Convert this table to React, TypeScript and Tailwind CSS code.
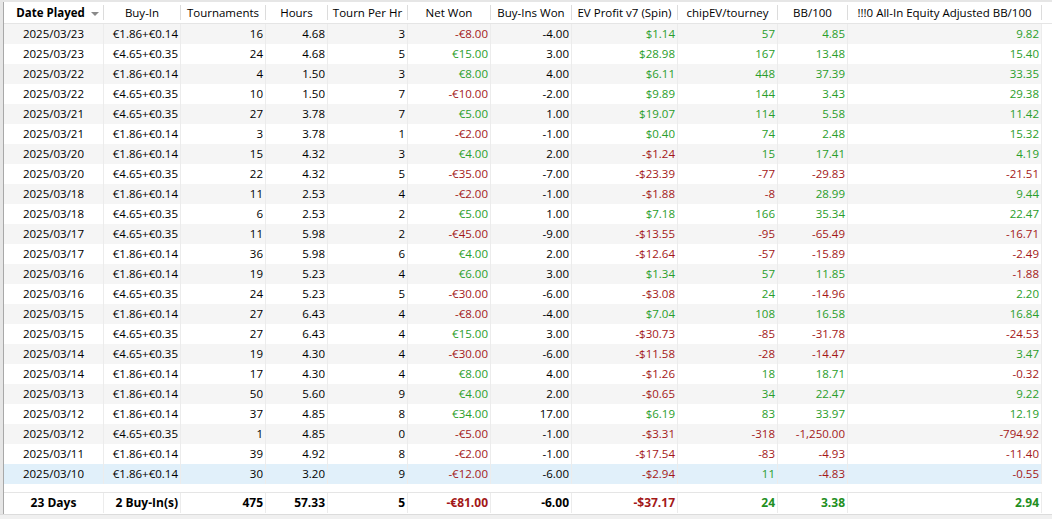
import React from 'react'

type Row = string[]

const widths = ['w-[100px]', 'w-[77px]', 'w-[85px]', 'w-[62px]', 'w-[80px]', 'w-[83px]', 'w-[81px]', 'w-[106px]', 'w-[100px]', 'w-[70px]', 'w-[194px]']
const headers = ['Date Played', 'Buy-In', 'Tournaments', 'Hours', 'Tourn Per Hr', 'Net Won', 'Buy-Ins Won', 'EV Profit v7 (Spin)', 'chipEV/tourney', 'BB/100', '!!!0 All-In Equity Adjusted BB/100']
// columns coloured by sign
const signed = [5, 7, 8, 9, 10]

const rows: Row[] = [
  ['2025/03/23', '€1.86+€0.14', '16', '4.68', '3', '-€8.00', '-4.00', '$1.14', '57', '4.85', '9.82'],
  ['2025/03/23', '€4.65+€0.35', '24', '4.68', '5', '€15.00', '3.00', '$28.98', '167', '13.48', '15.40'],
  ['2025/03/22', '€1.86+€0.14', '4', '1.50', '3', '€8.00', '4.00', '$6.11', '448', '37.39', '33.35'],
  ['2025/03/22', '€4.65+€0.35', '10', '1.50', '7', '-€10.00', '-2.00', '$9.89', '144', '3.43', '29.38'],
  ['2025/03/21', '€4.65+€0.35', '27', '3.78', '7', '€5.00', '1.00', '$19.07', '114', '5.58', '11.42'],
  ['2025/03/21', '€1.86+€0.14', '3', '3.78', '1', '-€2.00', '-1.00', '$0.40', '74', '2.48', '15.32'],
  ['2025/03/20', '€1.86+€0.14', '15', '4.32', '3', '€4.00', '2.00', '-$1.24', '15', '17.41', '4.19'],
  ['2025/03/20', '€4.65+€0.35', '22', '4.32', '5', '-€35.00', '-7.00', '-$23.39', '-77', '-29.83', '-21.51'],
  ['2025/03/18', '€1.86+€0.14', '11', '2.53', '4', '-€2.00', '-1.00', '-$1.88', '-8', '28.99', '9.44'],
  ['2025/03/18', '€4.65+€0.35', '6', '2.53', '2', '€5.00', '1.00', '$7.18', '166', '35.34', '22.47'],
  ['2025/03/17', '€4.65+€0.35', '11', '5.98', '2', '-€45.00', '-9.00', '-$13.55', '-95', '-65.49', '-16.71'],
  ['2025/03/17', '€1.86+€0.14', '36', '5.98', '6', '€4.00', '2.00', '-$12.64', '-57', '-15.89', '-2.49'],
  ['2025/03/16', '€1.86+€0.14', '19', '5.23', '4', '€6.00', '3.00', '$1.34', '57', '11.85', '-1.88'],
  ['2025/03/16', '€4.65+€0.35', '24', '5.23', '5', '-€30.00', '-6.00', '-$3.08', '24', '-14.96', '2.20'],
  ['2025/03/15', '€1.86+€0.14', '27', '6.43', '4', '-€8.00', '-4.00', '$7.04', '108', '16.58', '16.84'],
  ['2025/03/15', '€4.65+€0.35', '27', '6.43', '4', '€15.00', '3.00', '-$30.73', '-85', '-31.78', '-24.53'],
  ['2025/03/14', '€4.65+€0.35', '19', '4.30', '4', '-€30.00', '-6.00', '-$11.58', '-28', '-14.47', '3.47'],
  ['2025/03/14', '€1.86+€0.14', '17', '4.30', '4', '€8.00', '4.00', '-$1.26', '18', '18.71', '-0.32'],
  ['2025/03/13', '€1.86+€0.14', '50', '5.60', '9', '€4.00', '2.00', '-$0.65', '34', '22.47', '9.22'],
  ['2025/03/12', '€1.86+€0.14', '37', '4.85', '8', '€34.00', '17.00', '$6.19', '83', '33.97', '12.19'],
  ['2025/03/12', '€4.65+€0.35', '1', '4.85', '0', '-€5.00', '-1.00', '-$3.31', '-318', '-1,250.00', '-794.92'],
  ['2025/03/11', '€1.86+€0.14', '39', '4.92', '8', '-€2.00', '-1.00', '-$17.54', '-83', '-4.93', '-11.40'],
  ['2025/03/10', '€1.86+€0.14', '30', '3.20', '9', '-€12.00', '-6.00', '-$2.94', '11', '-4.83', '-0.55'],
]

const totals = ['23 Days', '2 Buy-In(s)', '475', '57.33', '5', '-€81.00', '-6.00', '-$37.17', '24', '3.38', '2.94']

const align = (i: number) => (i === 0 ? 'justify-center' : 'justify-end pr-[2px]')

function color(i: number, v: string, bold = false) {
  if (!signed.includes(i)) return 'text-black'
  if (v.startsWith('-')) return 'text-[#a31818]'
  return bold ? 'text-[#1f8f1f]' : 'text-[#2a9d2a]'
}

export default function App() {
  return (
    <div className="w-[1052px] h-[519px] overflow-hidden bg-[#e6e6e6] pt-[2px] pl-[3px] flex flex-col text-[11.5px] leading-none" style={{ fontFamily: '"Segoe UI", "Open Sans", sans-serif' }}>
      <div className="flex-1 flex flex-col bg-white border-l border-[#a8a8a8]">
        {/* header */}
        <div className="flex h-[22px] border-b border-[#e5e5e5] shrink-0">
          {headers.map((h, i) => (
            <div key={h} className={`${widths[i]} flex items-center shrink-0`}>
              <div className={`flex-1 flex items-center justify-center pt-px ${i === 0 ? 'font-bold pl-[8px]' : ''}`}>
                {h}
                {i === 0 && (
                  <svg width="8" height="5" viewBox="0 0 8 5" className="ml-[6px] mt-[2px]">
                    <path d="M0 0h8L4 4z" fill="#8a8a8a" />
                  </svg>
                )}
              </div>
              <div className="w-px h-[15px] bg-[#dcdcdc]" />
            </div>
          ))}
        </div>

        {/* body */}
        {rows.map((r, ri) => {
          const bg = ri === rows.length - 1 ? 'bg-[#e1f0fa]' : ri % 2 === 0 ? 'bg-[#f5f5f5]' : 'bg-white'
          return (
            <div key={ri} className={`flex h-[20px] shrink-0 w-[1038px] ${bg}`}>
              {r.map((v, i) => (
                <div key={i} className={`${widths[i]} shrink-0 flex items-center border-r border-[#ececec] ${align(i)} ${color(i, v)}`}>
                  {v}
                </div>
              ))}
            </div>
          )
        })}

        <div className="h-[8px] shrink-0" />

        {/* totals */}
        <div className="flex h-[21px] shrink-0 border-t border-[#e5e5e5] font-bold w-[1038px] text-[12px]">
          {totals.map((v, i) => (
            <div key={i} className={`${widths[i]} shrink-0 flex items-center border-r border-[#ececec] ${align(i)} ${color(i, v, true)}`}>
              {v}
            </div>
          ))}
        </div>
        <div className="flex-1" />
      </div>
      <div className="h-[5px] shrink-0 bg-[#f0f0f0] border-t border-[#dcdcdc] -ml-[3px]" />
    </div>
  )
}
